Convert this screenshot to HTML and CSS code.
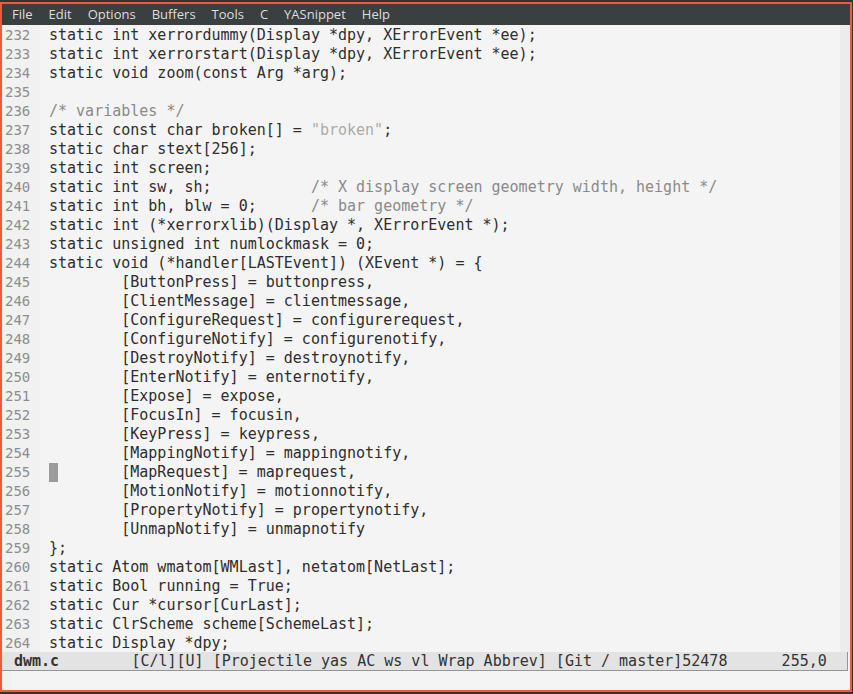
FILE: index.html
```html
<!DOCTYPE html>
<html lang="en">
<head>
    <meta charset="UTF-8">
    <title>dwm.c - Emacs</title>
    <link rel="stylesheet" href="styles.css">
</head>
<body>
    <div class="frame">
        <!-- Menu bar -->
        <div class="menubar">
            <span>File</span>
            <span>Edit</span>
            <span>Options</span>
            <span>Buffers</span>
            <span>Tools</span>
            <span>C</span>
            <span>YASnippet</span>
            <span>Help</span>
        </div>

        <!-- Buffer -->
        <div class="buffer">
            <div class="line"><span class="num">232</span><span class="code">static int xerrordummy(Display *dpy, XErrorEvent *ee);</span></div>
            <div class="line"><span class="num">233</span><span class="code">static int xerrorstart(Display *dpy, XErrorEvent *ee);</span></div>
            <div class="line"><span class="num">234</span><span class="code">static void zoom(const Arg *arg);</span></div>
            <div class="line"><span class="num">235</span><span class="code"></span></div>
            <div class="line"><span class="num">236</span><span class="code"><span class="comment">/* variables */</span></span></div>
            <div class="line"><span class="num">237</span><span class="code">static const char broken[] = <span class="string">"broken"</span>;</span></div>
            <div class="line"><span class="num">238</span><span class="code">static char stext[256];</span></div>
            <div class="line"><span class="num">239</span><span class="code">static int screen;</span></div>
            <div class="line"><span class="num">240</span><span class="code">static int sw, sh;           <span class="comment">/* X display screen geometry width, height */</span></span></div>
            <div class="line"><span class="num">241</span><span class="code">static int bh, blw = 0;      <span class="comment">/* bar geometry */</span></span></div>
            <div class="line"><span class="num">242</span><span class="code">static int (*xerrorxlib)(Display *, XErrorEvent *);</span></div>
            <div class="line"><span class="num">243</span><span class="code">static unsigned int numlockmask = 0;</span></div>
            <div class="line"><span class="num">244</span><span class="code">static void (*handler[LASTEvent]) (XEvent *) = {</span></div>
            <div class="line"><span class="num">245</span><span class="code">        [ButtonPress] = buttonpress,</span></div>
            <div class="line"><span class="num">246</span><span class="code">        [ClientMessage] = clientmessage,</span></div>
            <div class="line"><span class="num">247</span><span class="code">        [ConfigureRequest] = configurerequest,</span></div>
            <div class="line"><span class="num">248</span><span class="code">        [ConfigureNotify] = configurenotify,</span></div>
            <div class="line"><span class="num">249</span><span class="code">        [DestroyNotify] = destroynotify,</span></div>
            <div class="line"><span class="num">250</span><span class="code">        [EnterNotify] = enternotify,</span></div>
            <div class="line"><span class="num">251</span><span class="code">        [Expose] = expose,</span></div>
            <div class="line"><span class="num">252</span><span class="code">        [FocusIn] = focusin,</span></div>
            <div class="line"><span class="num">253</span><span class="code">        [KeyPress] = keypress,</span></div>
            <div class="line"><span class="num">254</span><span class="code">        [MappingNotify] = mappingnotify,</span></div>
            <div class="line"><span class="num">255</span><span class="code"><span class="cursor"> </span>       [MapRequest] = maprequest,</span></div>
            <div class="line"><span class="num">256</span><span class="code">        [MotionNotify] = motionnotify,</span></div>
            <div class="line"><span class="num">257</span><span class="code">        [PropertyNotify] = propertynotify,</span></div>
            <div class="line"><span class="num">258</span><span class="code">        [UnmapNotify] = unmapnotify</span></div>
            <div class="line"><span class="num">259</span><span class="code">};</span></div>
            <div class="line"><span class="num">260</span><span class="code">static Atom wmatom[WMLast], netatom[NetLast];</span></div>
            <div class="line"><span class="num">261</span><span class="code">static Bool running = True;</span></div>
            <div class="line"><span class="num">262</span><span class="code">static Cur *cursor[CurLast];</span></div>
            <div class="line"><span class="num">263</span><span class="code">static ClrScheme scheme[SchemeLast];</span></div>
            <div class="line"><span class="num">264</span><span class="code">static Display *dpy;</span></div>
        </div>

        <!-- Mode line -->
        <div class="modeline"><span class="bufname">dwm.c</span>        [C/l][U] [Projectile yas AC ws vl Wrap Abbrev] [Git / master]52478      255,0</div>

        <!-- Minibuffer -->
        <div class="minibuffer"></div>
    </div>
</body>
</html>
```

FILE: styles.css
```css
body {
    margin: 0;
    background-color: #2f3335;
    width: 853px;
    height: 694px;
    overflow: hidden;
}

.frame {
    box-sizing: border-box;
    width: 852px;
    height: 690px;
    margin-top: 2px;
    border: 2px solid #ef5a3b;
    background-color: #f4f4f4;
    display: flex;
    flex-direction: column;
}

/* Menu bar */
.menubar {
    height: 21px;
    background-color: #3a3f3f;
    color: #dedede;
    font-family: "Open Sans", sans-serif;
    font-size: 13px;
    display: flex;
    align-items: center;
    gap: 16px;
    padding-left: 10px;
    padding-bottom: 1px;
    box-sizing: border-box;
}

/* Buffer text */
.buffer {
    box-sizing: border-box;
    height: 627px;
    padding-top: 1px;
    overflow: hidden;
    font-family: "DejaVu Sans Mono", monospace;
    font-size: 15px;
    color: #2e2e2e;
    background: linear-gradient(to right, #f1f1f1 38px, #f4f4f4 38px, #f4f4f4 838px, #ececec 838px);
}

.line {
    display: flex;
    height: 19px;
    line-height: 19px;
    white-space: pre;
}

.num {
    width: 47px;
    padding-left: 3px;
    box-sizing: border-box;
    font-size: 14px;
    color: #8d8d8d;
}

.comment {
    color: #8a8a8a;
}

.string {
    color: #ababab;
}

.cursor {
    display: inline-block;
    width: 9px;
    height: 19px;
    vertical-align: top;
    background-color: #9b9b9b;
}

/* Mode line */
.modeline {
    box-sizing: border-box;
    height: 19px;
    line-height: 18px;
    padding-left: 12px;
    background-color: #e3e3e3;
    border-bottom: 1px solid #959595;
    border-right: 1px solid #959595;
    margin-right: 2px;
    font-family: "DejaVu Sans Mono", monospace;
    font-size: 15px;
    color: #333;
    white-space: pre;
}

.bufname {
    font-weight: bold;
}

.minibuffer {
    flex: 1;
    background: linear-gradient(to right, #f1f1f1 10px, #f4f4f4 10px);
}
```
